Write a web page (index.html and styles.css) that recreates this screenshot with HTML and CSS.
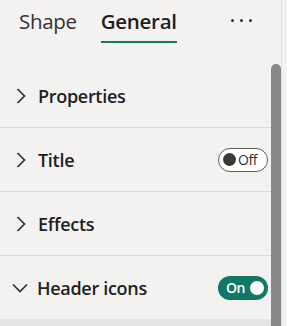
FILE: index.html
```html
<!DOCTYPE html>
<html>
<head>
<meta charset="utf-8">
<link rel="stylesheet" href="styles.css">
</head>
<body>
<div class="pane">
  <div class="main">
    <div class="tabs">
      <div class="tab">Shape</div>
      <div class="tab active">General</div>
      <div class="more"><span></span><span></span><span></span></div>
    </div>
    <div class="row">
      <svg class="chev" width="12" height="18" viewBox="0 0 12 18"><path d="M3.5 2 L10.5 9 L3.5 16" fill="none" stroke="#323130" stroke-width="1.7"/></svg>
      <span class="label">Properties</span>
    </div>
    <div class="row">
      <svg class="chev" width="12" height="18" viewBox="0 0 12 18"><path d="M3.5 2 L10.5 9 L3.5 16" fill="none" stroke="#323130" stroke-width="1.7"/></svg>
      <span class="label">Title</span>
      <div class="toggle off"><span class="knob"></span><span class="ttext">Off</span></div>
    </div>
    <div class="row">
      <svg class="chev" width="12" height="18" viewBox="0 0 12 18"><path d="M3.5 2 L10.5 9 L3.5 16" fill="none" stroke="#323130" stroke-width="1.7"/></svg>
      <span class="label">Effects</span>
    </div>
    <div class="row last">
      <svg class="chev down" width="18" height="12" viewBox="0 0 18 12"><path d="M2 2.5 L9 9.5 L16 2.5" fill="none" stroke="#323130" stroke-width="1.7"/></svg>
      <span class="label">Header icons</span>
      <div class="toggle on"><span class="ttext">On</span><span class="knob"></span></div>
    </div>
    <div class="footer"></div>
  </div>
  <div class="track"><div class="thumb"></div></div>
  <div class="edge"></div>
</div>
</body>
</html>
```
FILE: styles.css
```css
html, body {
  margin: 0;
  padding: 0;
  background: #f3f2f1;
  font-family: "Open Sans", "Noto Sans", sans-serif;
  color: #201f1e;
}
.pane {
  display: flex;
  height: 326px;
  width: 287px;
  overflow: hidden;
}
.main {
  width: 271px;
  display: flex;
  flex-direction: column;
}
.tabs {
  height: 64px;
  display: flex;
  align-items: flex-start;
  padding-left: 19px;
  box-sizing: border-box;
}
.tab {
  font-size: 20.5px;
  line-height: 26px;
  padding-top: 8px;
  padding-bottom: 7px;
  margin-right: 24px;
  color: #323130;
  letter-spacing: -0.3px;
}
.tab.active {
  font-weight: 600;
  color: #201f1e;
  border-bottom: 2.5px solid #117865;
}
.more {
  display: flex;
  gap: 6px;
  margin-left: 30px;
  margin-top: 19px;
}
.more span {
  width: 3px;
  height: 3px;
  border-radius: 50%;
  background: #323130;
}
.row {
  height: 63px;
  border-bottom: 1px solid #dddbd9;
  display: flex;
  align-items: center;
  padding-left: 14px;
  padding-right: 3px;
}
.row.last {
  height: 63px;
  border-bottom: none;
  padding-left: 11px;
}
.chev {
  margin-right: 12px;
  margin-top: 1px;
}
.chev.down {
  margin-right: 8px;
}
.label {
  font-size: 18px;
  font-weight: 600;
  letter-spacing: -0.3px;
  flex: 1;
  color: #201f1e;
}
.toggle {
  width: 50px;
  height: 24px;
  box-sizing: border-box;
  border-radius: 12px;
  display: flex;
  align-items: center;
  font-size: 14px;
}
.toggle.off {
  border: 1.5px solid #605e5c;
  background: #fff;
  padding-left: 4px;
  gap: 2px;
}
.toggle.off .knob {
  width: 13px;
  height: 13px;
  border-radius: 50%;
  background: #3b3a39;
}
.toggle.off .ttext {
  color: #323130;
  letter-spacing: -0.4px;
}
.toggle.on {
  background: #117865;
  padding-left: 8px;
  padding-right: 4px;
  justify-content: space-between;
}
.toggle.on .ttext {
  color: #fff;
  font-weight: 600;
  letter-spacing: -0.4px;
}
.toggle.on .knob {
  width: 14px;
  height: 14px;
  border-radius: 50%;
  background: #fff;
}
.footer {
  flex: 1;
  background: #e6e4e2;
}
.track {
  width: 10px;
  padding-top: 64px;
  display: flex;
  flex-direction: column;
}
.thumb {
  flex: 1;
  background: #8a8886;
  border-radius: 5px 5px 0 0;
}
.edge {
  width: 1px;
  background: #e1dfdd;
}
```
